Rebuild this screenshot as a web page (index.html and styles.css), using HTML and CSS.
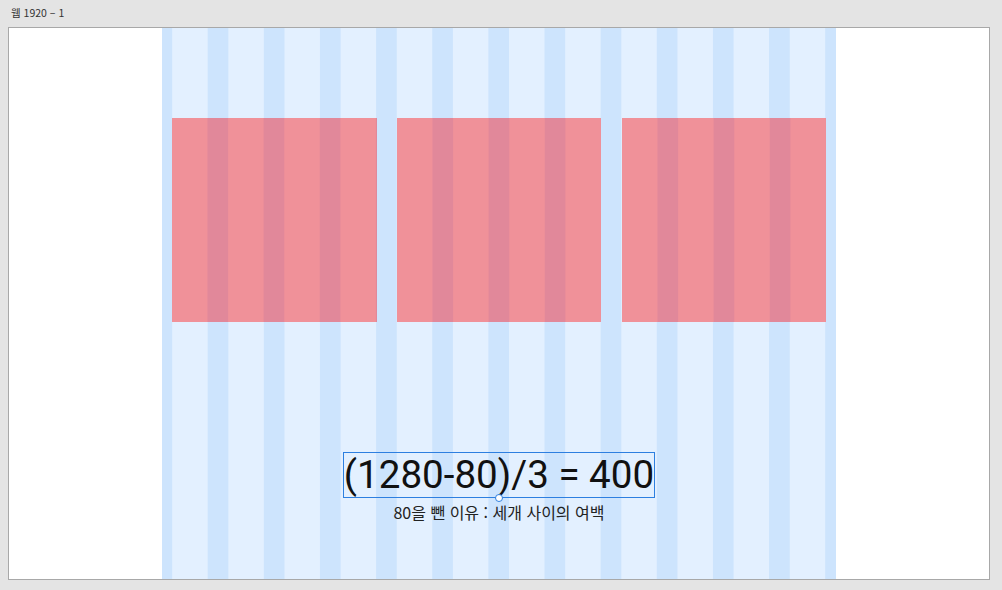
FILE: index.html
```html
<!DOCTYPE html>
<html lang="ko">
<head>
<meta charset="utf-8">
<link rel="stylesheet" href="styles.css">
</head>
<body>
<div class="app">
  <div class="title">웹 1920 – 1</div>
  <div class="artboard">
    <div class="grid">
      <div class="cards">
        <div class="card"></div>
        <div class="card"></div>
        <div class="card"></div>
      </div>
      <div class="formula-row">
        <div class="formula">(1280-80)/3 = 400<span class="handle"></span></div>
      </div>
      <div class="note">80을 뺀 이유 : 세개 사이의 여백</div>
    </div>
  </div>
</div>
</body>
</html>
```

FILE: styles.css
```css
html, body {
  margin: 0;
  padding: 0;
  background: #e4e4e4;
}
.app {
  width: 1002px;
  height: 590px;
  overflow: hidden;
}
.title {
  height: 27px;
  padding-left: 11px;
  font-family: "Noto Sans CJK KR", "Noto Sans", sans-serif;
  font-size: 10.5px;
  line-height: 25px;
  color: #333;
}
.artboard {
  margin-left: 8px;
  width: 980px;
  height: 551px;
  background: #fff;
  border: 1px solid #a8a8a8;
  display: flex;
  justify-content: center;
}
.grid {
  width: 673.75px;
  height: 100%;
  background-color: #cde4fd;
  background-image: linear-gradient(to right, #e3f0ff 0, #e3f0ff 35.73px, #cde4fd 35.73px, #cde4fd 56.15px);
  background-size: 56.15px 100%;
  background-position: 10.21px 0;
  background-repeat: repeat-x;
  display: flex;
  flex-direction: column;
  position: relative;
}
.grid::after {
  content: "";
  position: absolute;
  top: 0;
  bottom: 0;
  right: 0;
  width: 10.21px;
  background: #cde4fd;
}
.cards {
  display: flex;
  gap: 20.42px;
  padding-top: 90px;
  padding-left: 10.21px;
}
.card {
  width: 204.2px;
  height: 204px;
  background-color: #f09199;
  background-image: linear-gradient(to right, #f09199 0, #f09199 35.73px, #e1889a 35.73px, #e1889a 56.15px);
  background-size: 56.15px 100%;
  background-repeat: repeat-x;
}
.formula-row {
  display: flex;
  justify-content: center;
  margin-top: 130px;
}
.formula {
  position: relative;
  font-family: Roboto, "Liberation Sans", sans-serif;
  font-size: 38.6px;
  line-height: 44px;
  color: #111;
  border: 1px solid #2d7fe0;
  padding: 0;
  white-space: nowrap;
}
.handle {
  position: absolute;
  left: 50%;
  bottom: -5px;
  width: 6px;
  height: 6px;
  margin-left: -4px;
  border: 1.5px solid #2d7fe0;
  border-radius: 50%;
  background: #fff;
}
.note {
  margin-top: 3px;
  text-align: center;
  font-family: "Noto Sans CJK KR", "Noto Sans", sans-serif;
  font-size: 16px;
  line-height: 22px;
  color: #222;
}
```
